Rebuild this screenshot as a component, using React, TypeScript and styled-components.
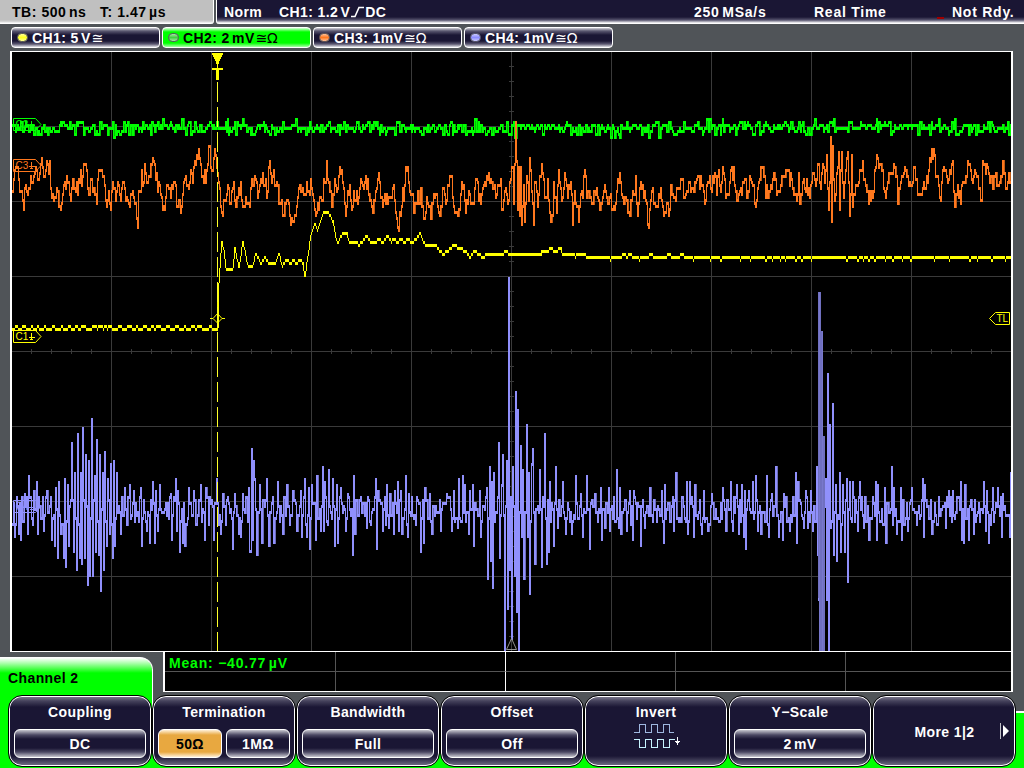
import React from 'react';
import styled, { createGlobalStyle } from 'styled-components';

const GlobalStyle = createGlobalStyle`
  * { box-sizing: border-box; }
  body { margin: 0; background: #505458; overflow: hidden; }
`;

const NAVY = '#1a1634';
const GREEN = '#00ff00';

const Screen = styled.div`
  width: 1024px;
  height: 768px;
  display: flex;
  flex-direction: column;
  background: #505458;
  color: #fff;
  font: bold 14px/16px 'Liberation Sans', Arial, sans-serif;
  letter-spacing: 0.4px;
  white-space: pre;
  overflow: hidden;
`;

const Unit = styled.span`
  word-spacing: -2px;
`;

const Symbols = styled.span`
  margin-left: 1px;
  font-family: 'DejaVu Sans', sans-serif;
  font-weight: normal;
  font-size: 14px;
  letter-spacing: -0.4px;
`;

/* ---------- status line ---------- */

const StatusLine = styled.header`
  display: flex;
  gap: 2px;
  height: 24px;
`;

const TimeBase = styled.div`
  width: 214px;
  padding: 4px 0 0 12px;
  display: grid;
  grid-template-columns: 88px 1fr;
  letter-spacing: 0.55px;
  color: #000;
  background: linear-gradient(#c0c0c0 0 20px, #dcdcdc 22px, #fff 23px);
  border-right: 1px solid #fff;
  border-bottom-right-radius: 3px;
`;

const Acquisition = styled.div`
  flex: 1;
  padding: 4px 0 0 7px;
  display: grid;
  grid-template-columns: 55px 415px 120px 122px 16px 1fr;
  background: linear-gradient(${NAVY} 0 17px, #55526c 20px, #c5c4cd 22px, #fff 23px);
  border-left: 1px solid #fff;
  border-bottom-left-radius: 3px;
`;

const StatusText = styled.span`
  letter-spacing: 0.75px;
`;

const SlopeIcon = styled.svg`
  vertical-align: -1px;
`;

const AlertMark = styled.i`
  align-self: start;
  width: 7px;
  height: 2px;
  margin: 13px 0 0 1px;
  background: #a00000;
`;

/* ---------- channel strip ---------- */

const ChannelStrip = styled.nav`
  display: flex;
  gap: 2px;
  height: 27px;
  padding: 3px 0 3px 11px;
`;

const ChannelTab = styled.div<{ $active?: boolean }>`
  width: 149px;
  height: 21px;
  padding: 0 0 0 5px;
  display: flex;
  align-items: center;
  border: 1px solid #fff;
  border-radius: 4px;
  color: ${p => (p.$active ? '#000' : '#fff')};
  background: ${p =>
    p.$active
      ? `linear-gradient(#d8ffd8, ${GREEN} 4px 15px, #a8ffa8)`
      : `linear-gradient(#d0d0d6, #5a5770 3px, ${NAVY} 7px 13px, #5a5770 16px, #e0e0e6)`};
`;

const Led = styled.i<{ $color: string }>`
  width: 11px;
  height: 9px;
  margin-right: 4px;
  border-radius: 5px;
  border: 1px solid #55555f;
  background: linear-gradient(#fff8, #fff0 50%, #fff8), ${p => p.$color};
`;

/* ---------- plot ---------- */

const Plot = styled.main`
  width: 1003px;
  height: 601px;
  margin-left: 10px;
  border: solid #fff;
  border-width: 1px 2px;
  background: #000;
  svg { display: block; }
`;

/* ---------- lower area ---------- */

const Lower = styled.footer`
  position: relative;
  height: 116px;
  display: flex;
  flex-direction: column;
`;

const MenuTab = styled.div`
  position: absolute;
  inset: 5px auto 54px 0;
  width: 153px;
  padding: 12px 0 0 8px;
  color: #000;
  background: linear-gradient(#fff, #b0ffb0 5px, ${GREEN} 15px);
  border: solid #fff;
  border-width: 1px 1px 0 0;
  border-radius: 0 13px 0 0;
`;

const MenuBase = styled.div`
  position: absolute;
  inset: 59px 0 0 0;
  background: ${GREEN};
  border-top: 2px solid #fff;
`;

const Measurements = styled.section`
  width: 850px;
  height: 40px;
  margin-left: 163px;
  display: grid;
  grid-template-columns: 171px 170px 170px 170px 1fr;
  grid-template-rows: 20px 1fr;
  border: solid #fff;
  border-width: 0 2px 1px;
  background: #000;
  color: ${GREEN};
  letter-spacing: 0.8px;
`;

const MeasureCell = styled.div<{ $bright?: boolean; $top?: boolean }>`
  border-right: 1px solid ${p => (p.$bright ? '#fff' : '#555')};
  border-bottom: ${p => (p.$top ? '1px solid #555' : 'none')};
  padding: 3px 0 0 4px;
  &:nth-child(5n) { border-right: 0; }
`;

const SoftKeys = styled.nav`
  position: relative;
  display: flex;
  padding: 3px 0 0 8px;
`;

const SoftKey = styled.div`
  position: relative;
  width: 144px;
  height: 72px;
  padding: 8px 5px 0;
  display: flex;
  flex-direction: column;
  align-items: center;
  border: 1px solid #000;
  border-radius: 14px;
  box-shadow: inset 0 0 0 1px #fff;
  background: linear-gradient(#77748a 1px, #45425c 5px, ${NAVY} 11px 60px, #45425c 65px, #77748a);
`;

const KeyTitle = styled.div`
  height: 25px;
`;

const Values = styled.div`
  display: flex;
  gap: 4px;
  width: 132px;
`;

const Value = styled.div<{ $selected?: boolean }>`
  flex: 1;
  height: 29px;
  padding-top: 6px;
  text-align: center;
  border: 1px solid #fff;
  border-radius: 6px;
  color: ${p => (p.$selected ? '#000' : '#fff')};
  background: ${p =>
    p.$selected
      ? 'linear-gradient(#fff0d8, #e8a840 5px 22px, #fff0d8)'
      : `linear-gradient(#c8c8d0, #4a4762 5px, ${NAVY} 9px 18px, #4a4762 22px, #c8c8d0)`};
`;

const InvertSlot = styled.div`
  margin: -6px 0 0 4px;
`;

const MoreLabel = styled.div`
  margin: 20px 0 0 1px;
`;

const MoreArrow = styled.svg`
  position: absolute;
  right: 5px;
  top: 27px;
`;

/* ---------- signals ---------- */

type Points = number[];

const CH3: Points = [12,190,15,167,17,167,19,190,23,207,25,183,28,187,32,180,35,165,38,178,41,158,44,175,46,161,48,172,49,160,50,187,53,198,57,190,60,207,63,183,67,180,70,198,72,177,77,193,78,178,82,176,85,163,87,187,91,178,93,188,96,203,97,178,99,170,104,183,105,200,108,190,110,207,112,180,115,200,117,182,120,198,123,182,125,200,128,203,131,192,134,203,137,226,138,190,141,170,143,180,144,163,146,182,149,176,152,157,155,177,160,192,164,207,166,183,170,195,173,180,177,205,181,205,183,180,188,187,190,168,192,180,195,163,198,148,200,163,205,180,208,146,211,168,214,148,217,172,219,187,221,211,224,200,227,185,230,203,233,182,235,204,238,188,240,182,242,204,246,203,249,205,250,188,255,178,257,195,259,185,262,172,264,185,267,190,269,160,271,180,273,169,275,185,280,202,283,213,286,200,289,213,291,216,295,213,297,195,299,185,303,193,306,180,308,190,310,178,312,192,315,213,318,208,320,197,323,178,326,160,328,180,331,204,334,178,337,187,339,167,341,170,343,188,345,213,347,190,349,185,351,207,353,190,355,200,358,195,360,178,363,187,365,175,368,193,372,210,375,190,378,172,381,195,385,203,388,195,392,187,394,200,397,225,400,213,402,187,403,200,405,167,407,167,409,190,413,210,416,202,420,187,423,217,426,197,430,217,433,193,437,204,439,213,443,187,446,200,449,175,451,175,453,206,457,213,460,193,463,185,465,210,468,190,471,203,474,188,476,178,478,200,480,201,483,183,488,172,491,182,495,195,498,184,500,178,501,207,504,190,508,200,510,178,512,166,513,202,514,163,515,122,517,207,518,166,519,213,520,166,521,222,523,185,524,219,526,175,528,200,529,157,531,190,533,222,534,182,537,204,541,163,544,196,547,178,550,219,553,181,556,210,558,169,561,200,564,172,567,195,570,180,572,222,574,190,578,219,580,193,582,196,584,169,586,197,592,203,596,187,599,207,603,190,606,197,610,192,612,207,614,207,617,178,620,180,622,195,626,200,629,213,632,190,635,175,637,213,639,187,642,183,645,198,648,226,651,190,655,206,660,188,663,213,666,203,668,213,670,185,675,200,677,187,682,178,684,195,689,180,693,190,697,175,701,185,705,200,709,175,711,190,714,173,716,192,718,169,720,190,722,167,725,195,729,180,733,167,735,190,738,193,743,181,746,195,750,178,754,202,758,180,762,167,765,195,770,185,773,172,776,193,780,183,787,169,792,187,796,198,798,172,799,202,803,178,809,195,812,172,815,183,818,163,820,187,822,163,824,180,826,154,828,207,830,137,831,219,832,145,834,198,836,172,838,151,839,207,841,151,843,195,845,168,847,150,849,213,851,154,852,204,854,193,858,180,862,160,865,185,868,202,872,195,876,154,880,163,883,188,885,195,890,172,893,163,897,202,900,180,904,167,909,180,914,167,917,192,924,187,927,180,930,160,933,148,935,175,938,185,940,198,943,167,947,180,952,160,954,205,957,183,960,202,962,180,967,160,972,180,975,172,978,187,981,198,982,160,987,167,992,187,995,172,998,183,1002,160,1005,188,1008,173,1011,190];

const CH4: Points = [12,523,14,534,16,497,18,531,20,537,24,493,27,531,28,475,32,522,33,490,36,481,37,531,42,497,43,528,46,490,51,537,54,543,55,487,57,555,58,481,60,531,63,555,64,478,65,564,67,484,68,543,71,442,73,550,74,472,76,567,77,433,79,555,80,472,81,561,82,427,84,555,85,454,87,582,88,460,89,573,91,418,92,573,94,475,95,550,96,439,98,552,99,454,100,588,102,472,103,567,104,451,106,543,107,478,109,531,110,463,112,555,113,460,114,543,116,472,118,505,120,531,124,487,126,523,129,484,133,490,136,515,140,487,141,543,143,498,146,528,149,540,152,481,154,540,155,490,157,528,159,484,163,510,167,502,170,493,171,537,175,478,176,528,177,490,179,550,181,508,182,540,184,543,188,487,191,513,193,490,197,515,200,484,204,537,205,487,208,523,211,500,213,537,216,478,218,523,220,531,222,493,225,523,228,503,232,547,234,493,238,531,240,535,242,493,244,510,248,487,249,549,250,550,251,448,252,538,253,460,254,478,256,553,259,484,261,540,266,478,268,543,272,497,273,540,277,481,279,520,282,531,286,484,289,522,292,490,296,528,300,490,301,535,304,478,306,535,308,487,309,547,311,484,315,537,316,475,320,528,322,466,323,528,324,481,327,522,328,469,332,478,334,543,336,484,337,540,340,487,345,528,347,493,350,515,352,553,353,475,354,531,359,500,366,526,367,497,370,522,375,478,376,547,377,490,382,528,386,484,388,526,389,493,393,531,394,490,397,481,398,528,400,490,401,531,405,475,407,535,408,493,412,515,415,522,417,500,420,550,423,540,424,487,429,493,431,531,439,500,440,528,446,493,451,528,453,490,457,526,458,478,460,520,462,475,464,484,468,531,469,490,472,484,473,543,479,490,480,535,486,487,487,577,489,466,490,559,491,481,492,586,493,472,495,510,498,442,499,556,501,484,502,454,504,650,506,460,507,607,508,277,509,568,510,497,511,637,512,466,514,574,515,391,516,609,517,409,518,649,520,445,521,535,522,469,523,577,526,424,527,535,528,472,529,592,531,463,532,448,534,562,539,469,541,565,544,433,546,562,548,550,549,481,553,544,555,466,557,526,562,481,565,532,567,503,571,532,575,475,577,517,580,493,582,535,586,475,589,547,594,493,600,487,601,538,604,526,608,487,609,529,613,497,616,469,618,527,619,487,620,532,626,528,629,490,632,538,633,490,640,544,642,500,644,526,649,487,656,520,661,490,663,541,664,484,673,529,675,472,680,520,686,481,687,532,689,481,693,535,694,484,701,532,703,490,707,528,711,493,716,517,722,487,725,528,730,481,732,528,736,484,738,532,741,484,743,535,744,490,745,547,748,490,752,481,755,475,757,528,760,532,766,475,768,535,771,493,775,466,778,535,782,538,783,493,789,528,792,497,795,472,796,541,797,481,803,525,805,490,807,525,810,490,812,528,816,466,817,553,818,598,819,540,825,478,826,598,827,373,828,650,829,424,830,525,832,403,833,553,835,484,836,559,839,472,840,550,842,484,844,550,846,478,847,580,849,481,852,481,854,520,857,528,859,481,863,525,864,497,868,538,872,496,875,481,876,538,877,484,880,520,884,487,885,541,891,466,893,487,896,532,900,487,901,538,907,528,911,487,916,523,922,478,923,535,924,484,931,532,938,497,945,525,948,490,952,490,955,510,960,481,961,538,963,541,964,484,968,538,970,500,973,532,977,510,983,481,985,528,986,490,988,541,992,487,993,520,997,487,1001,535,1002,493,1006,515,1009,535,1010,472];

const CH1: Points = [218,285,219,268,221,242,223,252,225,270,232,270,234,247,238,270,242,242,247,267,252,266,255,254,260,264,264,257,268,263,275,263,278,254,281,267,286,260,290,264,293,260,295,264,299,260,302,264,304,278,307,257,310,235,314,224,317,231,323,212,327,212,332,222,335,238,337,243,342,233,346,234,348,242,355,242,358,245,366,236,369,242,375,242,378,239,382,242,387,236,390,242,393,239,397,242,400,239,403,242,407,239,411,242,415,239,419,234,422,242,425,245,435,245,438,251,443,254,453,245,459,248,464,251,469,257,474,251,477,254,483,257,486,254,500,254];

function makeRandom(seed: number) {
  let s = seed;
  return () => {
    s = (s * 1664525 + 1013904223) >>> 0;
    return s / 4294967296;
  };
}

/** Vertical resolution of the display: one level is three pixels. */
const snap = (y: number) => Math.round((y - 1) / 3) * 3 + 1;

/** Adds small samples between the sparse peaks of a noisy channel. */
function addNoise(data: Points, seed: number, spread: number, centre?: number): Points {
  const rnd = makeRandom(seed);
  const out: Points = [];
  for (let i = 0; i < data.length; i += 2) {
    const x = data[i];
    const y = data[i + 1];
    out.push(x, y);
    if (i + 2 >= data.length) break;
    const nx = data[i + 2];
    const ny = data[i + 3];
    let cx = x + 1;
    while (cx < nx) {
      const mid = centre ?? y + ((ny - y) * (cx - x)) / (nx - x);
      out.push(cx, mid + (rnd() - 0.5) * 2 * spread);
      cx += 1 + Math.floor(rnd() * 1.5);
    }
  }
  return out;
}

/** Sample-and-hold outline: [bright, shaded] column paths. */
function columns(data: Points, dense?: boolean): [string, string] {
  let bright = '';
  let shade = '';
  for (let i = 0; i < data.length; i += 2) {
    const x = data[i];
    const y = snap(data[i + 1]);
    const prev = i ? snap(data[i - 1]) : y;
    const next = i + 2 < data.length ? data[i + 2] : x + 1;
    const top = Math.min(y, prev);
    const h = dense ? Math.abs(y - prev) + 3 : Math.max(3, Math.abs(y - prev));
    bright += `M${x} ${top}h1v${h}h-1z`;
    if (next - x > 1) {
      if (h > 8) shade += `M${x + 1} ${top}h1v${h}h-1z`;
      bright += `M${x + 1} ${y}h${next - x - 1}v3h-${next - x - 1}z`;
    }
  }
  return [bright, shade];
}

function noiseLine(seed: number): Points {
  const rnd = makeRandom(seed);
  const out: Points = [];
  for (let x = 12; x < 1011; x += rnd() > 0.5 ? 2 : 1) {
    const lift = x > 420 && x < 680 ? 1.5 : 0;
    const r = rnd() + rnd() - 1;
    out.push(x, 126 + lift + r * 9 + (rnd() > 0.96 ? 4 : 0));
  }
  return out;
}

function slowLine(): Points {
  const rnd = makeRandom(77);
  const out: Points = [];
  let x = 12;
  while (x < 217) {
    out.push(x, 328);
    x += 2 + Math.floor(rnd() * 7);
    if (x < 215) out.push(x, 325);
    x += 1 + Math.floor(rnd() * 4);
  }
  for (let i = 0; i + 3 < CH1.length; i += 2) {
    for (let c = CH1[i]; c < CH1[i + 2]; c++) {
      out.push(c, CH1[i + 1] + ((CH1[i + 3] - CH1[i + 1]) * (c - CH1[i])) / (CH1[i + 2] - CH1[i]) - 1);
    }
  }
  x = 500;
  while (x < 1010) {
    const base = x < 535 ? 253 : x < 553 ? 250 : x < 582 ? 253 : 256;
    out.push(x, base);
    x += 3 + Math.floor(rnd() * (x < 700 ? 14 : 6));
    if (x < 1010) out.push(x, x > 690 ? 259 : base + (rnd() > 0.5 ? 3 : -3));
    x += 1 + Math.floor(rnd() * 3);
  }
  out.push(1010, 259);
  return out;
}

function Trace({ data, color, dark, dense }: { data: Points; color: string; dark: string; dense?: boolean }) {
  const [bright, shade] = columns(data, dense);
  return (
    <>
      <path d={shade} fill={dark} />
      <path d={bright} fill={color} />
    </>
  );
}

const ch1 = slowLine();
const ch2 = noiseLine(4);
const ch3 = addNoise(CH3, 21, 9);
const ch4 = addNoise(CH4, 9, 14, 509);

const range = (n: number) => Array.from({ length: n }, (_, i) => i);

const grid =
  range(9).map(i => `M${111 + i * 100} 52h1v599h-1z`).join('') +
  range(7).map(i => `M12 ${126 + i * 75}h999v1h-999z`).join('') +
  range(49).map(i => `M${31 + i * 20} 349h1v5h-1z`).join('') +
  range(39).map(i => `M509 ${66 + i * 15}h5v1h-5z`).join('');

function GroundTag({ y, label, color }: { y: number; label: string; color: string }) {
  return (
    <g>
      <path
        d={`M13.5 ${y + 0.5}H35.5L41 ${y + 6.5}L35.5 ${y + 12.5}H13.5Z M31.5 ${y + 3}v6M29 ${y + 7.5}h6M30 ${y + 9.5}h3`}
        fill="none"
        stroke={color}
      />
      <text x="15.5" y={y + 10} fill={color} fontSize="10" fontWeight="normal" letterSpacing="0">
        {label}
      </text>
    </g>
  );
}

function ScopePlot() {
  return (
    <svg width="999" height="599" viewBox="12 52 999 599">
      <g shapeRendering="crispEdges">
        <path d={grid} fill="#3a3a3a" />
        <Trace dense data={ch2} color={GREEN} dark="#00c000" />
        <Trace dense data={ch3} color="#ff781e" dark="#c05a14" />
        <Trace dense data={ch4} color="#9090fc" dark="#6c6cba" />
        <path d="M818 292h3v39h2v105h2v215h-6V598h-1z" fill="#7070c0" />
        <path d="M819 292h1v359h-1zM822 331h1v320h-1z" fill="#7878cc" />
        <Trace data={ch1} color="#ffff00" dark="#b8b800" />
        <path d="M217 285h1v45h-1z" fill="#ffff00" />
        <path d="M217.5 82V651" stroke="#ffff28" strokeDasharray="20 5" />
        <path d="M212 53h11v2h-1v2h-1v2h-1v2h-1v3h-3v-3h-1v-2h-1v-2h-1v-2h-1z" fill="#ffff00" />
        <path d="M217 64h1v4h5v2h-4v10h-3V70h-4v-2h5z" fill="#ffff00" />
      </g>
      <path d="M210 318.5h3l4.5-5l4.5 5h3M213 318.5l4.5 4.5l4.5-4.5" fill="none" stroke="#ffff00" />
      <path d="M506.5 649.5L511.5 638.5L516.5 649.5Z" fill="none" stroke="#909090" />
      <GroundTag y={118} label="C2" color={GREEN} />
      <GroundTag y={159} label="C3" color="#ff781e" />
      <GroundTag y={330} label="C1" color="#ffff00" />
      <GroundTag y={500} label="C4" color="#9090fc" />
      <path d="M1009.5 312.5H995.5L989.5 318.5L995.5 324.5H1009.5Z" fill="none" stroke="#ffff00" />
      <text x="996.5" y="322" fill="#ffff00" fontSize="10" fontWeight="normal" letterSpacing="0">
        TL
      </text>
    </svg>
  );
}

function InvertIcon() {
  return (
    <svg width="48" height="27" viewBox="0 0 48 27" fill="none" shapeRendering="crispEdges">
      <path d="M0 9.5H5.5V1.5H11.5V9.5H17.5V1.5H23.5V9.5H29.5V1.5H35.5V9.5H40" stroke="#9fb8e0" />
      <path d="M0 16.5H5.5V24.5H11.5V16.5H17.5V24.5H23.5V16.5H29.5V24.5H35.5V16.5H41" stroke="#c8f4ff" />
      <path d="M43.5 13.5V22M41 18.5h5M42 19.5h3" stroke="#fff" />
    </svg>
  );
}

export default function App() {
  return (
    <Screen>
      <GlobalStyle />
      <StatusLine>
        <TimeBase>
          <span>TB: 500<Unit> ns</Unit></span>
          <span>T: 1.47<Unit> µs</Unit></span>
        </TimeBase>
        <Acquisition>
          <span>Norm</span>
          <span>
            CH1: 1.2<Unit> V</Unit>
            <SlopeIcon width="15" height="12" viewBox="0 0 15 12" fill="none">
              <path d="M1 10.5H5L9 1.5H14" stroke="#fff" strokeWidth="1.6" />
            </SlopeIcon>
            DC
          </span>
          <StatusText>250<Unit> MSa/s</Unit></StatusText>
          <StatusText>Real Time</StatusText>
          <AlertMark />
          <StatusText>Not Rdy.</StatusText>
        </Acquisition>
      </StatusLine>
      <ChannelStrip>
        <ChannelTab><Led $color="#ffff20" />CH1: 5<Unit> V</Unit><Symbols>≅</Symbols></ChannelTab>
        <ChannelTab $active><Led $color="#40d040" />CH2: 2<Unit> mV</Unit><Symbols>≅Ω</Symbols></ChannelTab>
        <ChannelTab><Led $color="#ff7820" />CH3: 1<Unit>mV</Unit><Symbols>≅Ω</Symbols></ChannelTab>
        <ChannelTab><Led $color="#8c8cff" />CH4: 1<Unit>mV</Unit><Symbols>≅Ω</Symbols></ChannelTab>
      </ChannelStrip>
      <Plot>
        <ScopePlot />
      </Plot>
      <Lower>
        <MenuBase />
        <MenuTab>Channel 2</MenuTab>
        <Measurements>
          {range(10).map(i => (
            <MeasureCell key={i} $top={i < 5} $bright={i % 5 === 1}>
              {i === 0 && <>Mean: −40.77<Unit> µV</Unit></>}
            </MeasureCell>
          ))}
        </Measurements>
        <SoftKeys>
          <SoftKey>
            <KeyTitle>Coupling</KeyTitle>
            <Values><Value>DC</Value></Values>
          </SoftKey>
          <SoftKey>
            <KeyTitle>Termination</KeyTitle>
            <Values><Value $selected>50Ω</Value><Value>1MΩ</Value></Values>
          </SoftKey>
          <SoftKey>
            <KeyTitle>Bandwidth</KeyTitle>
            <Values><Value>Full</Value></Values>
          </SoftKey>
          <SoftKey>
            <KeyTitle>Offset</KeyTitle>
            <Values><Value>Off</Value></Values>
          </SoftKey>
          <SoftKey>
            <KeyTitle>Invert</KeyTitle>
            <InvertSlot><InvertIcon /></InvertSlot>
          </SoftKey>
          <SoftKey>
            <KeyTitle>Y−Scale</KeyTitle>
            <Values><Value>2<Unit> mV</Unit></Value></Values>
          </SoftKey>
          <SoftKey>
            <MoreLabel>More 1|2</MoreLabel>
            <MoreArrow width="10" height="16" viewBox="0 0 10 16">
              <path d="M0 0h1v16h-1z" fill="#c0c0c8" />
              <path d="M3 2L9 8L3 14Z" fill="#fff" />
            </MoreArrow>
          </SoftKey>
        </SoftKeys>
      </Lower>
    </Screen>
  );
}
